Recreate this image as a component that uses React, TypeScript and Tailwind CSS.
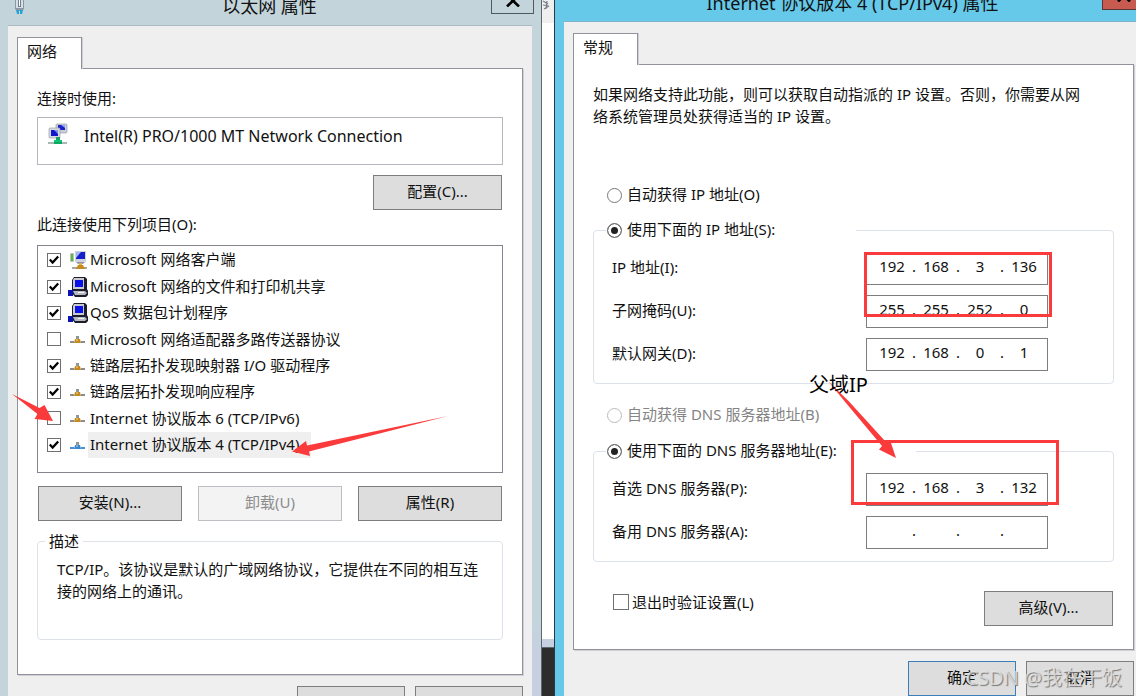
import React, { useState } from 'react';

const FONT = "font-['Noto_Sans','Noto_Sans_CJK_SC',sans-serif]";

type IconKind = 'client' | 'computer' | 'protocol' | 'protocolActive';

interface NetItem {
  id: string;
  label: string;
  icon: IconKind;
  enabled: boolean;
}

const ITEMS: NetItem[] = [
  { id: 'client', label: 'Microsoft 网络客户端', icon: 'client', enabled: true },
  { id: 'share', label: 'Microsoft 网络的文件和打印机共享', icon: 'computer', enabled: true },
  { id: 'qos', label: 'QoS 数据包计划程序', icon: 'computer', enabled: true },
  { id: 'mux', label: 'Microsoft 网络适配器多路传送器协议', icon: 'protocol', enabled: false },
  { id: 'lltdio', label: '链路层拓扑发现映射器 I/O 驱动程序', icon: 'protocol', enabled: true },
  { id: 'rspndr', label: '链路层拓扑发现响应程序', icon: 'protocol', enabled: true },
  { id: 'ipv6', label: 'Internet 协议版本 6 (TCP/IPv6)', icon: 'protocol', enabled: false },
  { id: 'ipv4', label: 'Internet 协议版本 4 (TCP/IPv4)', icon: 'protocolActive', enabled: true },
];

// --- ICONS ---

const AdapterIcon = () => (
  <svg width="20" height="22" viewBox="0 0 20 22" aria-hidden="true">
    <rect x="8" y="1" width="11" height="9" rx="1" fill="#c9cdd6" stroke="#9a9fab" strokeWidth="0.7" />
    <rect x="10" y="2" width="7" height="5" fill="#1c22c4" />
    <path d="M13 2h4v3z" fill="#8fa3f0" />
    <rect x="1" y="5" width="11" height="10" rx="1" fill="#d6d9e0" stroke="#9a9fab" strokeWidth="0.7" />
    <rect x="3" y="7" width="7" height="6" fill="#1414c8" />
    <path d="M6 7h4v4z" fill="#7f93ee" />
    <rect x="8" y="14" width="4" height="4" fill="#14a05e" />
    <path d="M6 17h8v3H6z" fill="#12c377" />
    <path d="M0 19h19v2H0z" fill="#a9b8b3" />
    <path d="M6 19h8v2H6z" fill="#0aa863" />
  </svg>
);

const ClientIcon = () => (
  <svg width="20" height="20" viewBox="0 0 20 20" aria-hidden="true">
    <rect x="2" y="3" width="4" height="9" rx="1" fill="#b9c0c4" />
    <rect x="3" y="4" width="2" height="7" fill="#52c234" />
    <rect x="7" y="1" width="11" height="11" fill="#cfd3dc" />
    <rect x="8" y="2" width="9" height="7" fill="#1420cc" />
    <path d="M8 2h5l-5 6z" fill="#9db4f5" />
    <path d="M8 12h9l-2 2h-5z" fill="#8f93b5" />
    <path d="M4 17h15v2H4z" fill="#a6a6a6" />
    <path d="M11 13h3v2h-3z" fill="#e2b355" />
    <path d="M10 15h5l2 4H8z" fill="#c98a1c" />
  </svg>
);

const ComputerIcon = () => (
  <svg width="20" height="20" viewBox="0 0 20 20" aria-hidden="true">
    <path d="M6 0h11l2 2v10l1 2v4l-2 2H7l-3-4V3z" fill="#1e1e2a" />
    <path d="M6 1h10v11H5V3z" fill="#c7cad3" />
    <rect x="7" y="3" width="8" height="7" fill="#0a12e6" />
    <path d="M5 14h12l2 2-2 2H7z" fill="#b8bac2" />
    <path d="M10 15h6v1h-6z" fill="#f5f5f5" />
    <rect x="0" y="13" width="5" height="6" fill="#0b12b4" />
  </svg>
);

const ProtocolIcon = ({ active }: { active?: boolean }) => (
  <svg width="20" height="20" viewBox="0 0 20 20" aria-hidden="true">
    <path d="M2 12h4v2H2zM13 12h4v2h-4z" fill={active ? '#4b8fd8' : '#8c8c8c'} />
    <path d="M8 7h3v3H8z" fill="#8d9795" />
    <path d="M7 10h5l1 4H6z" fill={active ? '#3c86d2' : '#c48a22'} />
    <path d="M8 10h2v2H8z" fill={active ? '#7cb8bd' : '#e2b355'} />
  </svg>
);

const ItemIcon = ({ kind }: { kind: IconKind }) => {
  if (kind === 'client') return <ClientIcon />;
  if (kind === 'computer') return <ComputerIcon />;
  return <ProtocolIcon active={kind === 'protocolActive'} />;
};

const PlugIcon = () => (
  <svg width="12" height="16" viewBox="0 0 12 16" aria-hidden="true">
    <path d="M1 0h9v9l-2 2H3L1 9z" fill="#8b97a3" />
    <path d="M2 0h7v8H2z" fill="#d5dee4" />
    <path d="M4 0h3v7H4z" fill="#6f7e8c" />
    <path d="M5 0h1v6H5z" fill="#fff" />
    <path d="M2 10h3v4H3zM6 10h3l-1 4H6z" fill="#24a5d8" />
  </svg>
);

const CloseGlyph = () => (
  <svg width="14" height="12" viewBox="0 0 14 12" aria-hidden="true">
    <path d="M1 0L13 11.5M13 0L1 11.5" stroke="#000" strokeWidth="2.6" />
  </svg>
);

// --- CONTROLS ---

const PushButton = ({ primary, className = '', children, ...props }: { primary?: boolean } & React.ButtonHTMLAttributes<HTMLButtonElement>) => (
  <button
    type="button"
    {...props}
    className={`h-[35px] shrink-0 border bg-[#dddddd] pb-[3px] leading-[22px] disabled:border-[#bcc0c4] disabled:bg-[#f3f3f3] disabled:text-[#8d8d8d] ${primary ? 'border-[#3c7fb8]' : 'border-[#7e7e7e]'} ${className}`}
  >
    {children}
  </button>
);

const CheckBox = ({ big, ...props }: { big?: boolean } & React.InputHTMLAttributes<HTMLInputElement>) => (
  <span className="grid shrink-0 place-items-center">
    <input
      type="checkbox"
      {...props}
      className={`peer col-start-1 row-start-1 appearance-none border border-[#707070] bg-white ${big ? 'size-4' : 'size-[14px]'}`}
    />
    <svg className="pointer-events-none invisible col-start-1 row-start-1 peer-checked:visible" width="12" height="12" viewBox="0 0 12 12" aria-hidden="true">
      <path d="M1.8 5.6L4.6 8.6L10.2 2.4" fill="none" stroke="#000" strokeWidth="2.2" />
    </svg>
  </span>
);

const Radio = ({ label, ...props }: { label: string } & React.InputHTMLAttributes<HTMLInputElement>) => (
  <label className="flex h-[22px] items-center gap-[5px] whitespace-nowrap leading-[22px] has-disabled:text-[#858585]">
    <input
      type="radio"
      {...props}
      className="size-[15px] shrink-0 appearance-none rounded-full border border-[#777] bg-white checked:bg-[#222] checked:shadow-[inset_0_0_0_3px_#fff] disabled:border-[#bbb]"
    />
    <span className="pb-[3px]">{label}</span>
  </label>
);

const IpRow = ({ id, label, value }: { id: string; label: string; value: string[] }) => {
  const [octets, setOctets] = useState(value);
  return (
    <div className="flex items-center">
      <label htmlFor={id} className="flex-1 pb-[3px] whitespace-nowrap">{label}</label>
      <div className="flex h-[33px] w-[182px] items-center border border-[#7e7e7e] bg-white pb-1 pl-[5px]">
        {octets.map((octet, i) => (
          <React.Fragment key={i}>
            {i > 0 && <span className="flex w-1 justify-center">.</span>}
            <input
              id={i === 0 ? id : undefined}
              aria-label={i === 0 ? undefined : `${label} ${i + 1}`}
              value={octet}
              maxLength={3}
              onChange={(e) => setOctets((prev) => prev.map((o, n) => (n === i ? e.target.value : o)))}
              className="h-[22px] w-10 bg-transparent text-center outline-none"
            />
          </React.Fragment>
        ))}
      </div>
    </div>
  );
};

const Tab = ({ children }: { children: React.ReactNode }) => (
  <button
    type="button"
    role="tab"
    aria-selected="true"
    className="relative z-10 -mb-px h-8 w-[65px] border border-b-0 border-[#92929c] bg-white pr-[15px] pb-[6px] leading-[22px] shadow-[1px_0_0_#cfcfd6]"
  >
    {children}
  </button>
);

const PANEL = 'border border-[#92929c] bg-white px-[19px] shadow-[1px_1px_0_#cfcfd6]';
const GROUP = 'min-w-0 rounded-[4px] border border-[#dde2ea]';

// --- WINDOWS ---

const EthernetWindow = () => {
  const [items, setItems] = useState(ITEMS);
  const toggle = (id: string) =>
    setItems((prev) => prev.map((it) => (it.id === id ? { ...it, enabled: !it.enabled } : it)));

  return (
    <section className="flex min-w-0 flex-col border-r border-[#5d686e] bg-[#c3d5db]">
      <header className="flex h-[25px] shrink-0 items-start justify-between overflow-hidden pr-[7px] pl-[14px]">
        <div className="w-[34px]"><PlugIcon /></div>
        <h1 className="text-lg leading-3">以太网 属性</h1>
        <button type="button" aria-label="关闭" className="flex h-[14px] w-[43px] items-end justify-center overflow-hidden border border-t-0 border-[#4f5a60] pb-[6px]">
          <CloseGlyph />
        </button>
      </header>

      <div className="flex flex-1 pl-2">
        <div className="min-w-0 flex-1 border-t border-[#a9bac0] bg-[#efefef] px-[9px] pt-[11px]">
          <Tab>网络</Tab>
          <div className={`${PANEL} pt-[18px] pb-[34px]`}>
            <p className="leading-[22px]">连接时使用:</p>
            <div className="mt-2 flex h-12 items-start gap-4 border border-[#b4b7bd] pt-[5px] pl-[10px]">
              <AdapterIcon />
              <span className="mt-[2px] text-base leading-[22px] whitespace-nowrap">Intel(R) PRO/1000 MT Network Connection</span>
            </div>
            <div className="mt-[10px] flex justify-end pr-px">
              <PushButton className="w-[129px]">配置(C)...</PushButton>
            </div>

            <p className="mt-[3px] leading-[22px]">此连接使用下列项目(O):</p>
            <ul className="mt-[10px] flex h-[228px] flex-col border border-[#85858f] pt-px pb-[14px] pl-[9px]">
              {items.map((it) => (
                <li key={it.id} className="flex flex-1">
                  <label className="flex items-center">
                    <CheckBox checked={it.enabled} onChange={() => toggle(it.id)} />
                    <span className="ml-[7px]"><ItemIcon kind={it.icon} /></span>
                    <span className={`flex h-full items-center pr-3 pb-px pl-[2px] whitespace-nowrap ${it.id === 'ipv4' ? 'bg-[#efefef]' : ''}`}>
                      {it.label}
                    </span>
                  </label>
                </li>
              ))}
            </ul>

            <div className="mt-[13px] grid grid-cols-3 gap-4 px-px">
              <PushButton>安装(N)...</PushButton>
              <PushButton disabled>卸载(U)</PushButton>
              <PushButton>属性(R)</PushButton>
            </div>

            <fieldset className={`${GROUP} mt-[9px] h-[110px] pr-[18px] pl-[19px]`}>
              <legend className="-ml-3 px-1 leading-[22px]">描述</legend>
              <p className="pt-[6px] leading-[22px]">
                TCP/IP。该协议是默认的广域网络协议，它提供在不同的相互连接的网络上的通讯。
              </p>
            </fieldset>
          </div>

          <div className="mt-[11px] flex justify-end gap-[10px]">
            <PushButton className="w-[108px] pt-2">确定</PushButton>
            <PushButton className="w-[108px] pt-2">取消</PushButton>
          </div>
        </div>
        <div className="w-[9px] shrink-0 bg-linear-to-b from-[#c3d5db] from-85% to-[#c6d0e0] to-90%" />
      </div>
    </section>
  );
};

const BackgroundStrip = () => (
  <div className="flex flex-col bg-white">
    <div className="h-[23px] bg-[#efefef]">
      <svg width="8" height="11" viewBox="0 0 8 11" aria-hidden="true">
        <path d="M1 1l5 3M1 5l6 1M2 9l5-3M5 1l-1 8" stroke="#7b7f88" strokeWidth="1.2" fill="none" />
      </svg>
    </div>
    <div className="flex-1" />
    <div className="h-2 bg-[#c6d0e0]" />
    <div className="h-[49px] border-t border-[#5d686e] bg-[#2d2d2d]" />
  </div>
);

const Ipv4Window = () => {
  const [ipMode, setIpMode] = useState('manual');
  return (
    <section className="flex min-w-0 flex-col border-l border-[#2e3a40] bg-[#66c9ea]">
      <header className="flex h-[21px] shrink-0 items-start overflow-hidden">
        <h1 className="flex-1 pl-[48px] text-center text-lg leading-[6px] whitespace-nowrap">Internet 协议版本 4 (TCP/IPv4) 属性</h1>
        <button type="button" aria-label="关闭" className="flex h-[10px] w-[34px] items-end justify-end overflow-hidden border border-t-0 border-r-0 border-[#5b3330] bg-[#c75b50] pr-[5px] pb-[7px]">
          <CloseGlyph />
        </button>
      </header>

      <div className="flex flex-1 pl-[9px]">
        <div className="min-w-0 flex-1 border-t border-[#7fb4c8] bg-[#efefef] pt-[11px] pr-[2px] pl-[9px]">
          <Tab>常规</Tab>
          <div className={`${PANEL} pt-[18px] pb-[23px]`}>
            <p className="leading-[22px] whitespace-nowrap">
              如果网络支持此功能，则可以获取自动指派的 IP 设置。否则，你需要从网<br />
              络系统管理员处获得适当的 IP 设置。
            </p>

            <div className="mt-[57px] pl-[14px]">
              <Radio name="ip" label="自动获得 IP 地址(O)" checked={ipMode === 'auto'} onChange={() => setIpMode('auto')} />
            </div>
            <fieldset className={`${GROUP} mt-[13px]`}>
              <legend className="ml-3 w-[250px] pl-px">
                <Radio name="ip" label="使用下面的 IP 地址(S):" checked={ipMode === 'manual'} onChange={() => setIpMode('manual')} />
              </legend>
              <div className="flex flex-col gap-[10px] pt-[11px] pr-[65px] pb-3 pl-[18px]">
                <IpRow id="ip-address" label="IP 地址(I):" value={['192', '168', '3', '136']} />
                <IpRow id="ip-mask" label="子网掩码(U):" value={['255', '255', '252', '0']} />
                <IpRow id="ip-gateway" label="默认网关(D):" value={['192', '168', '0', '1']} />
              </div>
            </fieldset>

            <div className="mt-5 pl-[14px]">
              <Radio name="dns" label="自动获得 DNS 服务器地址(B)" disabled />
            </div>
            <fieldset className={`${GROUP} mt-[14px]`}>
              <legend className="ml-3 w-[310px] pl-px">
                <Radio name="dns" label="使用下面的 DNS 服务器地址(E):" defaultChecked />
              </legend>
              <div className="flex flex-col gap-[10px] pt-[11px] pr-[65px] pb-3 pl-[18px]">
                <IpRow id="dns-primary" label="首选 DNS 服务器(P):" value={['192', '168', '3', '132']} />
                <IpRow id="dns-secondary" label="备用 DNS 服务器(A):" value={['', '', '', '']} />
              </div>
            </fieldset>

            <div className="mt-[29px] flex items-start justify-between pr-px pl-5">
              <label className="flex items-center gap-[3px] leading-[22px]">
                <CheckBox big />
                退出时验证设置(L)
              </label>
              <PushButton className="w-[129px]">高级(V)...</PushButton>
            </div>
          </div>

          <div className="mt-[11px] flex justify-end gap-[10px]">
            <PushButton primary className="w-[108px]">确定</PushButton>
            <PushButton className="w-[108px]">取消</PushButton>
          </div>
        </div>
      </div>
    </section>
  );
};

// Hand drawn notes lying over both windows
const Annotations = () => (
  <div className="pointer-events-none absolute inset-0">
    <div className="absolute top-[252px] left-[864px] h-[65px] w-[188px] border-[3px] border-[#fb3b3b]" />
    <div className="absolute top-[440px] left-[851px] h-[65px] w-[208px] border-[3px] border-[#fb3b3b]" />
    <svg className="absolute top-0 left-0" width="1136" height="696" viewBox="0 0 1136 696" fill="#fb3b3b" aria-hidden="true">
      <path d="M12 394L39.5 408L44.5 405L53 421L34.5 419L37.5 414Z" />
      <path d="M448 416L307 445.5L306 441L292 451.5L310 456L309 451.5Z" />
      <path d="M828 381L849 401.5L885 441L890.5 441.5L896 458L879 449.5L882 446L846 403Z" />
    </svg>
    <span className="absolute top-[373px] left-[809px] text-xl leading-6 text-black">父域IP</span>
    <span className="absolute right-[14px] bottom-[6px] text-xl leading-6 whitespace-nowrap text-[#e6e6e6]/80 [text-shadow:1px_1px_1px_#777]">
      CSDN @我在干饭
    </span>
  </div>
);

export default function App() {
  return (
    <main className={`${FONT} relative grid h-screen grid-cols-[542fr_12px_582fr] grid-rows-[100vh] overflow-hidden bg-white text-[15px] text-[#111]`}>
      <EthernetWindow />
      <BackgroundStrip />
      <Ipv4Window />
      <Annotations />
    </main>
  );
}
